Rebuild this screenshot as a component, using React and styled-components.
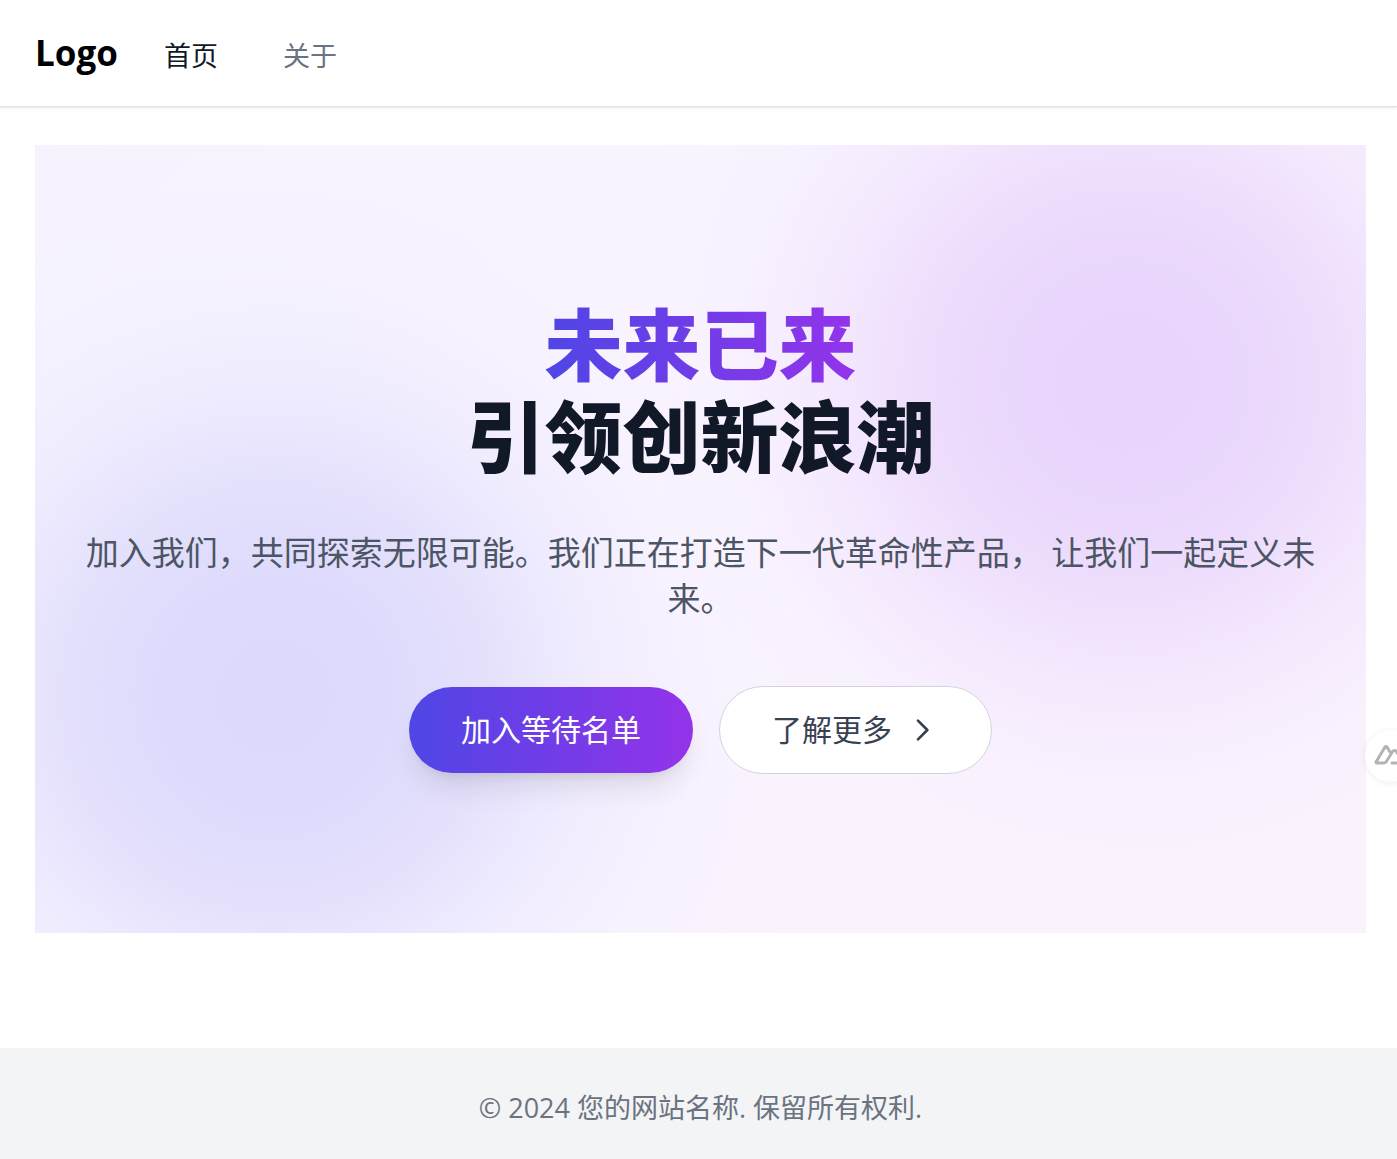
import React from 'react'
import styled, { createGlobalStyle } from 'styled-components'

const GlobalStyle = createGlobalStyle`
  * {
    box-sizing: border-box;
  }
  body {
    margin: 0;
    background: #fff;
    font-family: 'Open Sans', 'Noto Sans CJK SC', sans-serif;
  }
`
const Page = styled.div`
  display: flex;
  flex-direction: column;
  min-height: 100vh;
  overflow-x: hidden;
`
const Header = styled.header`
  display: flex;
  align-items: flex-end;
  gap: 46px;
  padding: 28px 35px;
  border-bottom: 1px solid #e2e3e5;
  box-shadow: 0 1px 2px rgba(0, 0, 0, 0.1);
`
const Logo = styled.a`
  color: #000;
  font-size: 35px;
  font-weight: 700;
  line-height: 50px;
  text-decoration: none;
`
const Nav = styled.nav`
  display: flex;
  gap: 65px;
`
const NavLink = styled.a`
  color: ${props => props.$active ? '#111827' : '#6b7280'};
  font-size: 27px;
  line-height: 44px;
  text-decoration: none;
`
const Main = styled.main`
  flex: 1;
  padding: 38px 31px 115px 35px;
`
const Hero = styled.section`
  display: flex;
  flex-direction: column;
  align-items: center;
  padding: 157px 35px 159px;
  text-align: center;
  background:
    radial-gradient(circle at 82% 30%, #e9d4fc 0, rgba(233, 213, 252, 0.94) 120px, rgba(234, 215, 252, 0.76) 210px, rgba(238, 222, 253, 0.45) 310px, rgba(241, 228, 254, 0.15) 400px, rgba(243, 232, 255, 0) 480px),
    radial-gradient(circle at 18% 70%, #dbd8fb 0, rgba(220, 217, 252, 0.94) 120px, rgba(222, 219, 252, 0.78) 210px, rgba(228, 226, 254, 0.45) 310px, rgba(234, 234, 255, 0.15) 420px, rgba(238, 242, 255, 0) 520px),
    linear-gradient(135deg, #f6f3ff 0%, #faf4ff 50%, #faf2fd 100%);
`
const Title = styled.h1`
  margin: 0;
  color: #111827;
  font-family: 'Liberation Sans', 'Noto Sans CJK SC', sans-serif;
  font-size: 78px;
  font-weight: 900;
  line-height: 92px;
`
const Highlight = styled.span`
  display: block;
  width: fit-content;
  margin: 0 auto;
  color: transparent;
  background: linear-gradient(to right, #4f46e5, #9333ea);
  background-clip: text;
`
const Lead = styled.p`
  margin: 44px 0 64px;
  color: #4b5563;
  font-size: 33px;
  line-height: 46px;
`
const Actions = styled.div`
  display: flex;
  flex-wrap: wrap;
  align-items: center;
  justify-content: center;
  gap: 26px;
`
const Button = styled.button`
  display: flex;
  align-items: center;
  gap: 14px;
  padding: 20px 52px;
  border: none;
  border-radius: 44px;
  color: #fff;
  font-family: inherit;
  font-size: 30px;
  line-height: 46px;
  background: linear-gradient(to right, #4f46e5, #9333ea);
  box-shadow: 0 19px 29px -6px rgba(0, 0, 0, 0.1), 0 8px 12px -8px rgba(0, 0, 0, 0.1);
  cursor: pointer;
`
const OutlineButton = styled(Button)`
  padding-right: 53px;
  border: 1px solid #d1d5db;
  color: #374151;
  background: #fff;
  box-shadow: none;
`
const Footer = styled.footer`
  padding: 40px 31px 31px 35px;
  color: #6b7280;
  font-size: 27px;
  line-height: 40px;
  text-align: center;
  background: #f3f4f6;
`
const FloatingButton = styled.button`
  position: fixed;
  top: 730px;
  right: -20px;
  display: flex;
  align-items: center;
  width: 52px;
  height: 52px;
  padding: 0 0 0 9px;
  border: none;
  border-radius: 50%;
  background: #fff;
  box-shadow: 0 1px 6px rgba(0, 0, 0, 0.08);
  cursor: pointer;
`

const ChevronIcon = () => (
  <svg width='32' height='32' viewBox='0 0 24 24' fill='none' stroke='currentColor' strokeWidth='2' strokeLinecap='round' strokeLinejoin='round' aria-hidden='true'>
    <path d='M9 5l7 7-7 7' />
  </svg>
)

const MountainIcon = () => (
  <svg width='34' height='24' viewBox='0 0 34 24' fill='none' stroke='#b3b3b3' strokeWidth='3' strokeLinejoin='round' strokeLinecap='round' aria-hidden='true'>
    <path d='M16 8l-3-5q-1-1-2 0L2 18q0 1 1 1h7q1 0 2-1l7-11q2-1 3 0l7 11q0 1-1 1H18' />
  </svg>
)

const App = () => {
  return (
    <>
      <GlobalStyle />
      <Page>
        <Header>
          <Logo href='#'>Logo</Logo>
          <Nav>
            <NavLink href='#' $active>首页</NavLink>
            <NavLink href='#about'>关于</NavLink>
          </Nav>
        </Header>
        <Main>
          <Hero>
            <Title>
              <Highlight>未来已来</Highlight>
              引领创新浪潮
            </Title>
            <Lead>加入我们，共同探索无限可能。我们正在打造下一代革命性产品， 让我们一起定义未来。</Lead>
            <Actions>
              <Button type='button'>加入等待名单</Button>
              <OutlineButton type='button'>了解更多<ChevronIcon /></OutlineButton>
            </Actions>
          </Hero>
        </Main>
        <Footer>© 2024 您的网站名称. 保留所有权利.</Footer>
      </Page>
      <FloatingButton type='button' aria-label='Nuxt'><MountainIcon /></FloatingButton>
    </>
  )
}

export default App
